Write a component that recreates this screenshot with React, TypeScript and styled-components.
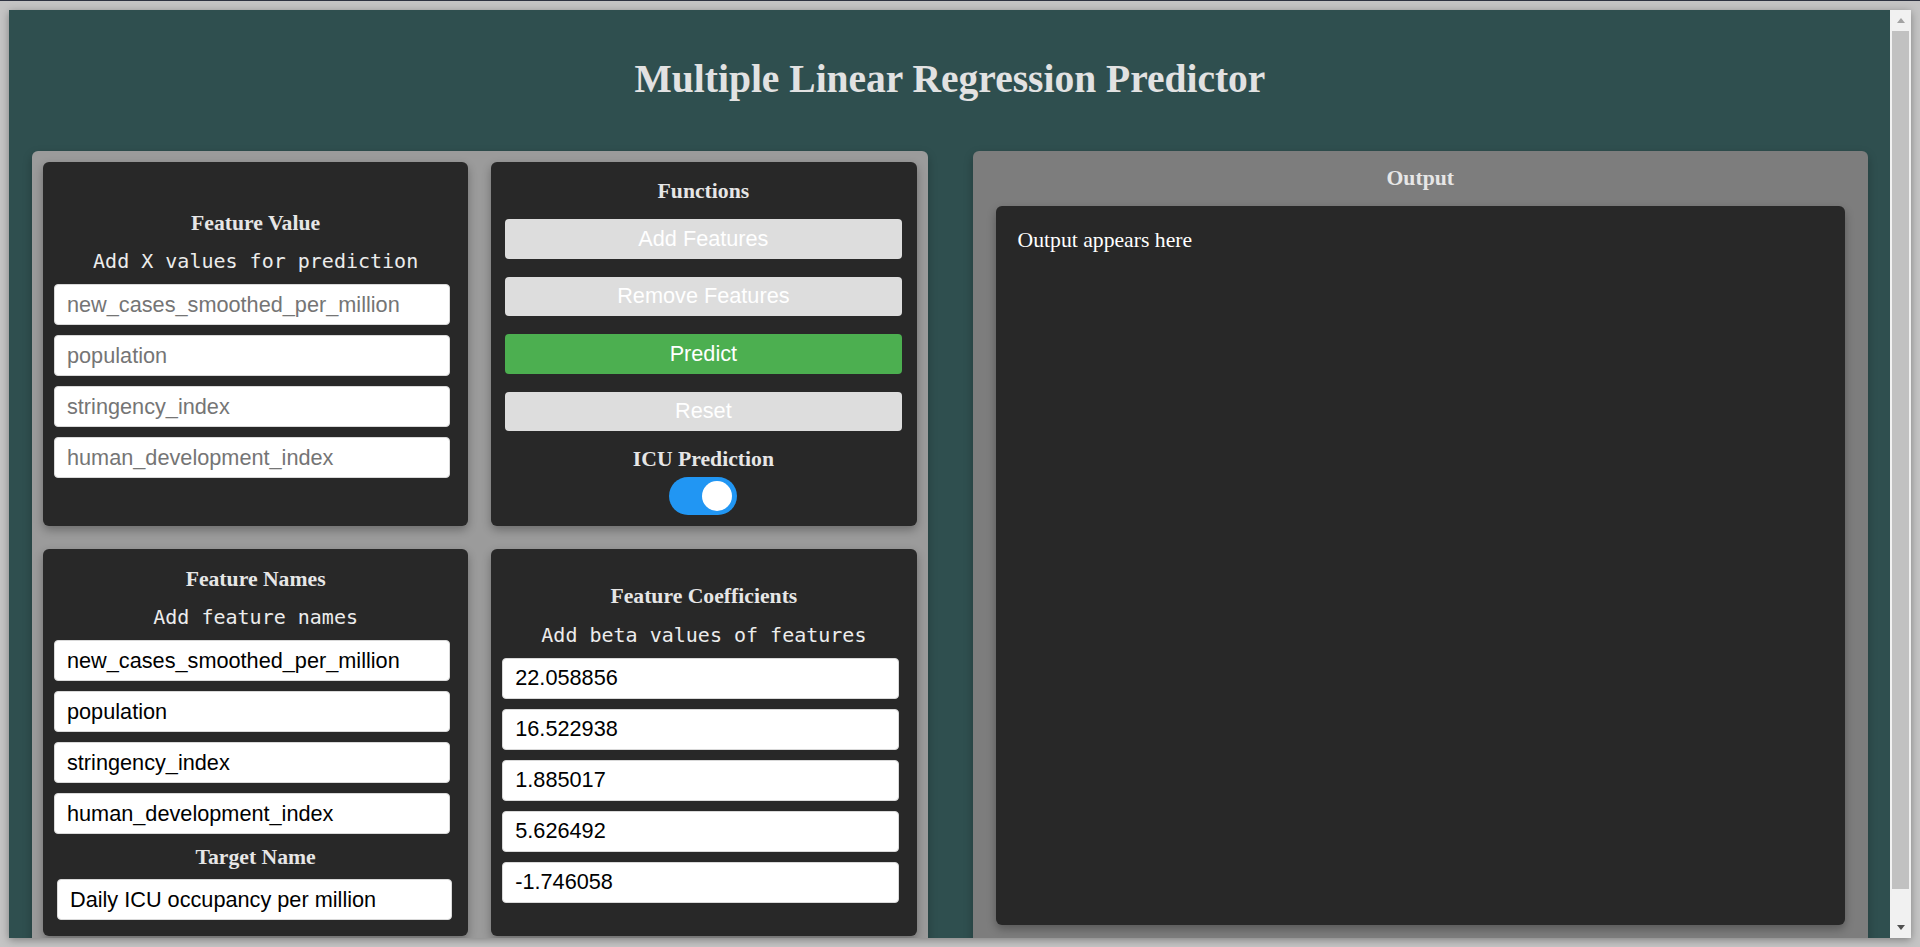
import React from "react";
import styled, { createGlobalStyle } from "styled-components";

const GlobalStyle = createGlobalStyle`
  html, body { margin: 0; padding: 0; }
  *, *::before, *::after { box-sizing: border-box; }
  body {
    width: 1920px;
    height: 947px;
    overflow: hidden;
    background: #c4c4c4;
    border-top: 1px solid #2d3240;
    font-family: "Liberation Serif", serif;
  }
`;

const Frame = styled.div`
  padding: 9px 9px 0 9px;
`;

const Window = styled.div`
  width: 1902px;
  height: 928px;
  display: flex;
  box-shadow: 0 2px 8px rgba(0, 0, 0, 0.35);
`;

const Viewport = styled.div`
  flex: 1;
  overflow: hidden;
  background: #2f4f4f;
`;

const Page = styled.main`
  padding: 45.5px 22px 11px 23px;
`;

const Title = styled.h1`
  margin: 0 0 49.5px;
  font: bold 39.5px/46px "Liberation Serif", serif;
  color: #e2e2e2;
  text-align: center;
`;

const Columns = styled.div`
  display: grid;
  grid-template-columns: 1fr 1fr;
  column-gap: 45px;
  align-items: stretch;
`;

const LeftPanel = styled.section`
  background: #9b9b9b;
  border-radius: 6px;
  padding: 11px;
  display: grid;
  grid-template-columns: 1fr 1fr;
  gap: 23px;
  box-shadow: 0 4px 10px rgba(0, 0, 0, 0.25);
`;

const Card = styled.div<{ $centered?: boolean; $pad: string }>`
  background: #282828;
  border-radius: 6px;
  box-shadow: 0 4px 10px rgba(0, 0, 0, 0.3);
  display: flex;
  flex-direction: column;
  justify-content: ${(p) => (p.$centered ? "center" : "flex-start")};
  padding: ${(p) => p.$pad};
`;

const Heading = styled.h3<{ $mb: number; $mt?: number }>`
  margin: ${(p) => p.$mt ?? 0}px 0 ${(p) => p.$mb}px;
  font: bold 21.7px/25px "Liberation Serif", serif;
  color: #e6e6e6;
  text-align: center;
`;

const Subtitle = styled.p`
  margin: 0 0 11px;
  font: 20px/24px "DejaVu Sans Mono", monospace;
  color: #ececec;
  text-align: center;
  white-space: pre;
`;

const FieldList = styled.div`
  display: flex;
  flex-direction: column;
  gap: 10px;
`;

const Field = styled.input<{ $offset?: number; $trim?: number }>`
  height: 41px;
  width: calc(100% - ${(p) => p.$trim ?? 7}px - ${(p) => p.$offset ?? 0}px);
  margin-left: ${(p) => p.$offset ?? 0}px;
  border: 1px solid #d9d9d9;
  border-radius: 4px;
  padding: 0 12px;
  background: #fff;
  color: #000;
  font: 21.7px "Liberation Sans", Arial, sans-serif;
  outline: none;
  &::placeholder {
    color: #757575;
  }
`;

const ButtonStack = styled.div`
  display: flex;
  flex-direction: column;
  gap: 18px;
  margin-bottom: 15.5px;
`;

const ActionButton = styled.button<{ $primary?: boolean }>`
  height: 39.5px;
  border: none;
  border-radius: 4px;
  background: ${(p) => (p.$primary ? "#4caf50" : "#dddddd")};
  color: #fff;
  font: 21.7px "Liberation Sans", Arial, sans-serif;
  cursor: pointer;
`;

const SwitchTrack = styled.label`
  align-self: center;
  width: 68px;
  height: 38px;
  border-radius: 19px;
  background: #2196f3;
  display: flex;
  justify-content: flex-end;
  align-items: center;
  padding: 0 5px;
  cursor: pointer;
  input {
    display: none;
  }
`;

const SwitchKnob = styled.span`
  width: 30px;
  height: 30px;
  border-radius: 50%;
  background: #fff;
`;

const RightPanel = styled.section`
  background: #7d7d7d;
  border-radius: 6px;
  padding: 15px 23px 22px;
  display: flex;
  flex-direction: column;
  box-shadow: 0 4px 10px rgba(0, 0, 0, 0.25);
`;

const OutputBox = styled.div`
  flex: 1;
  background: #282828;
  border-radius: 6px;
  padding: 21.5px 22px;
  font: 21.7px/25px "Liberation Serif", serif;
  color: #fff;
  box-shadow: 0 4px 10px rgba(0, 0, 0, 0.3);
`;

const Scrollbar = styled.div`
  width: 21px;
  background: #f1f1f1;
  display: flex;
  flex-direction: column;
`;

const ScrollArrow = styled.div<{ $down?: boolean }>`
  height: 21px;
  display: flex;
  align-items: center;
  justify-content: center;
  &::after {
    content: "";
    width: 0;
    height: 0;
    border-left: 4.5px solid transparent;
    border-right: 4.5px solid transparent;
    ${(p) =>
      p.$down
        ? "border-top: 5px solid #505050;"
        : "border-bottom: 5px solid #a3a3a3;"}
  }
`;

const ScrollTrack = styled.div`
  flex: 1;
  padding: 0 2px;
`;

const ScrollThumb = styled.div`
  height: 858px;
  background: #c1c1c1;
`;

const featureNames = [
  "new_cases_smoothed_per_million",
  "population",
  "stringency_index",
  "human_development_index",
];

const coefficients = ["22.058856", "16.522938", "1.885017", "5.626492", "-1.746058"];

export default function App() {
  return (
    <>
      <GlobalStyle />
      <Frame>
        <Window>
          <Viewport>
            <Page>
              <Title>Multiple Linear Regression Predictor</Title>
              <Columns>
                <LeftPanel>
                  <Card $centered $pad="0 11px">
                    <Heading $mt={1} $mb={13.5}>Feature Value</Heading>
                    <Subtitle>Add X values for prediction</Subtitle>
                    <FieldList>
                      {featureNames.map((n) => (
                        <Field key={n} placeholder={n} />
                      ))}
                    </FieldList>
                  </Card>

                  <Card $pad="16.5px 15px 11px 14px">
                    <Heading $mb={15.5}>Functions</Heading>
                    <ButtonStack>
                      <ActionButton>Add Features</ActionButton>
                      <ActionButton>Remove Features</ActionButton>
                      <ActionButton $primary>Predict</ActionButton>
                      <ActionButton>Reset</ActionButton>
                    </ButtonStack>
                    <Heading $mb={5.5}>ICU Prediction</Heading>
                    <SwitchTrack>
                      <input type="checkbox" defaultChecked />
                      <SwitchKnob />
                    </SwitchTrack>
                  </Card>

                  <Card $pad="16px 11px">
                    <Heading $mt={2} $mb={13}>Feature Names</Heading>
                    <Subtitle>Add feature names</Subtitle>
                    <FieldList>
                      {featureNames.map((n) => (
                        <Field key={n} defaultValue={n} />
                      ))}
                    </FieldList>
                    <Heading $mt={10.5} $mb={9.5}>
                      Target Name
                    </Heading>
                    <Field $offset={3} $trim={5} defaultValue="Daily ICU occupancy per million" />
                  </Card>

                  <Card $centered $pad="0 11px">
                    <Heading $mt={1} $mb={14}>Feature Coefficients</Heading>
                    <Subtitle>Add beta values of features</Subtitle>
                    <FieldList>
                      {coefficients.map((c) => (
                        <Field key={c} defaultValue={c} />
                      ))}
                    </FieldList>
                  </Card>
                </LeftPanel>

                <RightPanel>
                  <Heading $mb={15}>Output</Heading>
                  <OutputBox>Output appears here</OutputBox>
                </RightPanel>
              </Columns>
            </Page>
          </Viewport>
          <Scrollbar>
            <ScrollArrow />
            <ScrollTrack>
              <ScrollThumb />
            </ScrollTrack>
            <ScrollArrow $down />
          </Scrollbar>
        </Window>
      </Frame>
    </>
  );
}
